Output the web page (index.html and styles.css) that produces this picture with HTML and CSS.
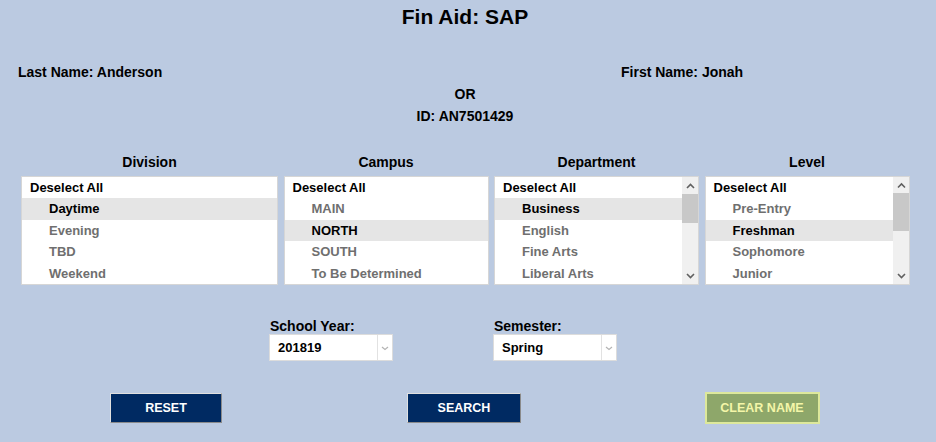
FILE: index.html
```html
<!DOCTYPE html>
<html>
<head>
<meta charset="utf-8">
<title>Fin Aid: SAP</title>
<link rel="stylesheet" href="styles.css">
</head>
<body>
<div class="page">
  <h1 class="title">Fin Aid: SAP</h1>
  <div class="names">
    <div class="name">Last Name: Anderson</div>
    <div class="name">First Name: Jonah</div>
  </div>
  <div class="center-line">OR</div>
  <div class="center-line">ID: AN7501429</div>

  <div class="filters">
    <div class="filter">
      <div class="filter-head">Division</div>
      <div class="listbox">
        <div class="options">
          <div class="opt all">Deselect All</div>
          <div class="opt sel">Daytime</div>
          <div class="opt">Evening</div>
          <div class="opt">TBD</div>
          <div class="opt">Weekend</div>
        </div>
      </div>
    </div>
    <div class="filter">
      <div class="filter-head">Campus</div>
      <div class="listbox">
        <div class="options">
          <div class="opt all">Deselect All</div>
          <div class="opt">MAIN</div>
          <div class="opt sel">NORTH</div>
          <div class="opt">SOUTH</div>
          <div class="opt">To Be Determined</div>
        </div>
      </div>
    </div>
    <div class="filter">
      <div class="filter-head">Department</div>
      <div class="listbox">
        <div class="options">
          <div class="opt all">Deselect All</div>
          <div class="opt sel">Business</div>
          <div class="opt">English</div>
          <div class="opt">Fine Arts</div>
          <div class="opt">Liberal Arts</div>
        </div>
        <div class="scrollbar">
          <div class="sb-btn"><svg width="16" height="17" viewBox="0 0 16 17"><path d="M5 11 L8.5 7.5 L12 11" stroke="#606060" stroke-width="1.6" fill="none"/></svg></div>
          <div class="sb-thumb" style="height:29px"></div>
          <div class="sb-track"></div>
          <div class="sb-btn"><svg width="16" height="17" viewBox="0 0 16 17"><path d="M5 7 L8.5 10.5 L12 7" stroke="#606060" stroke-width="1.6" fill="none"/></svg></div>
        </div>
      </div>
    </div>
    <div class="filter">
      <div class="filter-head">Level</div>
      <div class="listbox">
        <div class="options">
          <div class="opt all">Deselect All</div>
          <div class="opt">Pre-Entry</div>
          <div class="opt sel">Freshman</div>
          <div class="opt">Sophomore</div>
          <div class="opt">Junior</div>
        </div>
        <div class="scrollbar">
          <div class="sb-btn sb-btn-short"><svg width="16" height="16" viewBox="0 0 16 16"><path d="M5 10.5 L8.5 7 L12 10.5" stroke="#606060" stroke-width="1.6" fill="none"/></svg></div>
          <div class="sb-thumb" style="height:38px"></div>
          <div class="sb-track"></div>
          <div class="sb-btn"><svg width="16" height="17" viewBox="0 0 16 17"><path d="M5 7 L8.5 10.5 L12 7" stroke="#606060" stroke-width="1.6" fill="none"/></svg></div>
        </div>
      </div>
    </div>
  </div>

  <div class="selects">
    <div class="field">
      <div class="field-label">School Year:</div>
      <div class="dropdown">
        <div class="dropdown-value">201819</div>
        <div class="dropdown-arrow"><svg width="14" height="25" viewBox="0 0 14 25"><path d="M4 12 L7 14.5 L10 12" stroke="#b4b4b4" stroke-width="1.2" fill="none"/></svg></div>
      </div>
    </div>
    <div class="field">
      <div class="field-label">Semester:</div>
      <div class="dropdown">
        <div class="dropdown-value">Spring</div>
        <div class="dropdown-arrow"><svg width="14" height="25" viewBox="0 0 14 25"><path d="M4 12 L7 14.5 L10 12" stroke="#b4b4b4" stroke-width="1.2" fill="none"/></svg></div>
      </div>
    </div>
  </div>

  <div class="actions">
    <button class="btn btn-navy btn-reset">RESET</button>
    <button class="btn btn-navy btn-search">SEARCH</button>
    <button class="btn btn-clear">CLEAR NAME</button>
  </div>
</div>
</body>
</html>
```

FILE: styles.css
```css
html, body {
  margin: 0;
  padding: 0;
  background: #bbcae1;
}

body {
  font-family: "Liberation Sans", Arial, sans-serif;
  color: #000;
  font-weight: bold;
}

.page {
  width: 930px;
}

.title {
  margin: 5px 0 0 0;
  font-size: 21px;
  line-height: 24px;
  font-weight: bold;
  text-align: center;
}

.names {
  margin-top: 32px;
  display: grid;
  grid-template-columns: 603px auto;
  padding-left: 18px;
  font-size: 14px;
  line-height: 22px;
}

.center-line {
  text-align: center;
  font-size: 14px;
  line-height: 22px;
}

.filters {
  margin-top: 27px;
  padding-left: 21px;
  display: grid;
  grid-template-columns: 257px 205px 205px 205px;
  column-gap: 5.5px;
}

.filter-head {
  text-align: center;
  font-size: 14px;
  line-height: 16px;
  margin-bottom: 6px;
}

.listbox {
  box-sizing: border-box;
  height: 109px;
  background: #fff;
  border: 1px solid #d6d6d6;
  display: flex;
}

.options {
  flex: 1;
  display: flex;
  flex-direction: column;
}

.opt {
  height: 21.4px;
  line-height: 21.4px;
  font-size: 13px;
  padding-left: 27px;
  color: #6f6f6f;
  white-space: nowrap;
}

.opt.all {
  padding-left: 8px;
  color: #000;
}

.opt.sel {
  background: #e5e5e5;
  color: #000;
}

.scrollbar {
  width: 16px;
  background: #f0f0f0;
  display: flex;
  flex-direction: column;
}

.sb-btn {
  height: 17px;
  display: flex;
}

.sb-btn-short {
  height: 16px;
}

.sb-thumb {
  background: #c8c8c8;
}

.sb-track {
  flex: 1;
}

.selects {
  margin-top: 33px;
  padding-left: 269px;
  display: flex;
  gap: 100px;
}

.field-label {
  font-size: 14px;
  line-height: 16px;
  padding-left: 1px;
}

.dropdown {
  box-sizing: border-box;
  width: 124px;
  height: 27px;
  background: #fff;
  border: 1px solid #dcdcdc;
  display: flex;
}

.dropdown-value {
  flex: 1;
  font-size: 13px;
  line-height: 26px;
  padding-left: 8px;
}

.dropdown-arrow {
  width: 14px;
  border-left: 1px solid #e2e2e2;
  display: flex;
}

.actions {
  margin-top: 31px;
  padding-left: 17px;
  display: grid;
  grid-template-columns: 298px 298px 298px;
  justify-items: center;
  align-items: center;
}

.btn {
  box-sizing: border-box;
  height: 30px;
  font-family: "Liberation Sans", Arial, sans-serif;
  font-weight: bold;
  font-size: 12.5px;
  padding: 0;
  margin: 0;
  cursor: pointer;
}

.btn-navy {
  background: #002a62;
  color: #fff;
  border: 1px solid;
  border-color: #e0e0e0 #8a8a8a #8a8a8a #e0e0e0;
}

.btn-reset {
  width: 112px;
}

.btn-search {
  width: 114px;
}

.btn-clear {
  width: 115px;
  height: 32px;
  background: #8ea76a;
  color: #f4f6a8;
  border: 2px solid #dde89b;
}
```
